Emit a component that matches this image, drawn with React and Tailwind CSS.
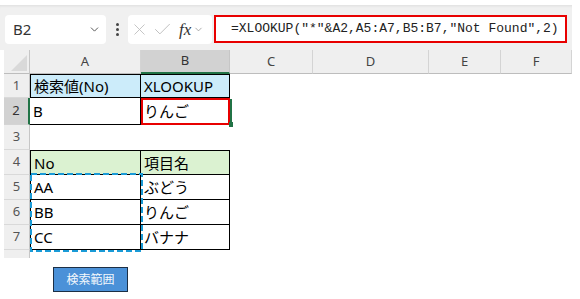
import { ChevronDown, X, Check } from 'lucide-react';

// Excel-like sheet: formula bar + grid with two small tables
const COLS = ['A', 'B', 'C', 'D', 'E', 'F'];

const RowHead = ({ n, active = false }) => (
  <div
    className={
      active
        ? 'flex items-center justify-center bg-[#d2d2d2] border-r-2 border-r-[#217346] border-b border-b-[#d4d4d4] text-[13px] text-[#333]'
        : 'flex items-center justify-center bg-[#efefef] border-r border-r-[#c6c6c6] border-b border-b-[#d9d9d9] text-[13px] text-[#555]'
    }
  >
    {n}
  </div>
);

const Cell = ({ children, className = '' }) => (
  <div className={`flex items-center pl-[3px] pt-[1px] text-[15px] leading-none text-black ${className}`}>{children}</div>
);

const Empty = () => <div />;

const App = () => {
  return (
    <div className="w-[580px] h-[299px] bg-white overflow-hidden font-['Noto_Sans','Noto_Sans_CJK_JP',sans-serif]">
      {/* formula bar */}
      <div className="h-[5px]" />
      <div className="flex h-[45px] w-[572px] items-start bg-[#f0f0f0] pt-[10px] pl-[5px] shadow-[inset_0_3px_3px_-2px_rgba(0,0,0,0.08)]">
        <div className="flex h-[29px] w-[101px] items-center justify-between rounded-[4px] bg-white pl-[8px] pr-[5px] text-[15px] text-[#333]">
          <span>B2</span>
          <ChevronDown size={13} strokeWidth={1.8} className="text-[#555]" />
        </div>
        <div className="flex h-[29px] w-[22px] flex-col items-center justify-center gap-[2px]">
          <span className="h-[3px] w-[3px] rounded-full bg-[#444]" />
          <span className="h-[3px] w-[3px] rounded-full bg-[#444]" />
          <span className="h-[3px] w-[3px] rounded-full bg-[#444]" />
        </div>
        <div className="flex h-[29px] w-[84px] items-center rounded-[4px] bg-white pl-[2px]">
          <X size={19} strokeWidth={1.1} className="text-[#bdbdbd]" />
          <Check size={21} strokeWidth={1.1} className="ml-[3px] text-[#bdbdbd]" />
          <span className="ml-[6px] font-['Liberation_Serif',serif] text-[17px] italic text-[#333]">fx</span>
          <ChevronDown size={11} strokeWidth={1.5} className="ml-[2px] text-[#888]" />
        </div>
        <div className="ml-[2px] flex h-[28px] w-[353px] items-center border-2 border-[#e80000] bg-white pl-[15px] font-['Liberation_Mono',monospace] text-[13px] text-[#222]">
          =XLOOKUP("*"&amp;A2,A5:A7,B5:B7,"Not Found",2)
        </div>
      </div>

      {/* sheet */}
      <div className="relative ml-[4px] grid w-[568px] grid-cols-[26px_111px_89px_83px_116px_72px_71px] grid-rows-[24px_24px_27px_25px_25px_25px_25px_25px_8px]">
        {/* header row */}
        <div className="flex items-end justify-end bg-[#efefef] border-r border-r-[#c6c6c6] border-b border-b-[#bdbdbd] p-[2px]">
          <svg width="16" height="16" viewBox="0 0 16 16">
            <path d="M16 0 L16 16 L0 16 Z" fill="#d9d9d9" />
          </svg>
        </div>
        {COLS.map((c) =>
          c === 'B' ? (
            <div key={c} className="flex items-center justify-center bg-[#d2d2d2] border-r border-r-[#c6c6c6] border-b-2 border-b-[#217346] text-[13px] text-[#333]">
              {c}
            </div>
          ) : (
            <div key={c} className="flex items-center justify-center bg-[#efefef] border-r border-r-[#d4d4d4] border-b border-b-[#bdbdbd] text-[13px] text-[#444]">
              {c}
            </div>
          )
        )}

        {/* row 1 */}
        <RowHead n={1} />
        <Cell className="bg-[#ccecfa] border border-black">検索値(No)</Cell>
        <Cell className="bg-[#ccecfa] border-t border-r border-b border-black">XLOOKUP</Cell>
        <Empty /><Empty /><Empty /><Empty />

        {/* row 2 */}
        <RowHead n={2} active />
        <Cell className="border-r border-b border-black">B</Cell>
        <Cell className="border-r border-b border-black">りんご</Cell>
        <Empty /><Empty /><Empty /><Empty />

        {/* row 3 */}
        <RowHead n={3} />
        <Empty /><Empty /><Empty /><Empty /><Empty /><Empty />

        {/* row 4 */}
        <RowHead n={4} />
        <Cell className="bg-[#dbf2d1] border border-black">No</Cell>
        <Cell className="bg-[#dbf2d1] border-t border-r border-b border-black">項目名</Cell>
        <Empty /><Empty /><Empty /><Empty />

        {/* rows 5-7 */}
        <RowHead n={5} />
        <Cell className="border-l border-r border-b border-black">AA</Cell>
        <Cell className="border-r border-b border-black">ぶどう</Cell>
        <Empty /><Empty /><Empty /><Empty />

        <RowHead n={6} />
        <Cell className="border-l border-r border-b border-black">BB</Cell>
        <Cell className="border-r border-b border-black">りんご</Cell>
        <Empty /><Empty /><Empty /><Empty />

        <RowHead n={7} />
        <Cell className="border-l border-r border-b border-black">CC</Cell>
        <Cell className="border-r border-b border-black">バナナ</Cell>
        <Empty /><Empty /><Empty /><Empty />

        {/* row 8 (cut off) */}
        <div className="bg-[#efefef] border-r border-r-[#c6c6c6]" />
        <Empty /><Empty /><Empty /><Empty /><Empty /><Empty />

        {/* selection overlays */}
        <div className="absolute left-[137px] top-[48px] h-[27px] w-[89px] border-2 border-[#e80000]" />
        <div className="absolute left-[226px] top-[49px] h-[24px] w-[2px] bg-[#217346]" />
        <div className="absolute left-[225px] top-[72px] h-[5px] w-[4px] bg-[#217346]" />
        <svg className="absolute left-[26px] top-[123px]" width="113" height="79">
          <rect x="1" y="1" width="111" height="77" fill="none" stroke="#1a9bd7" strokeWidth="2" strokeDasharray="6 3" />
        </svg>
      </div>

      {/* button */}
      <div className="ml-[53px] mt-[9px] flex h-[25px] w-[75px] items-center justify-center border border-[#1c2f45] bg-[#4b91d8] text-[12px] text-[#f4f8fc]">
        検索範囲
      </div>
    </div>
  );
};

export default App;
